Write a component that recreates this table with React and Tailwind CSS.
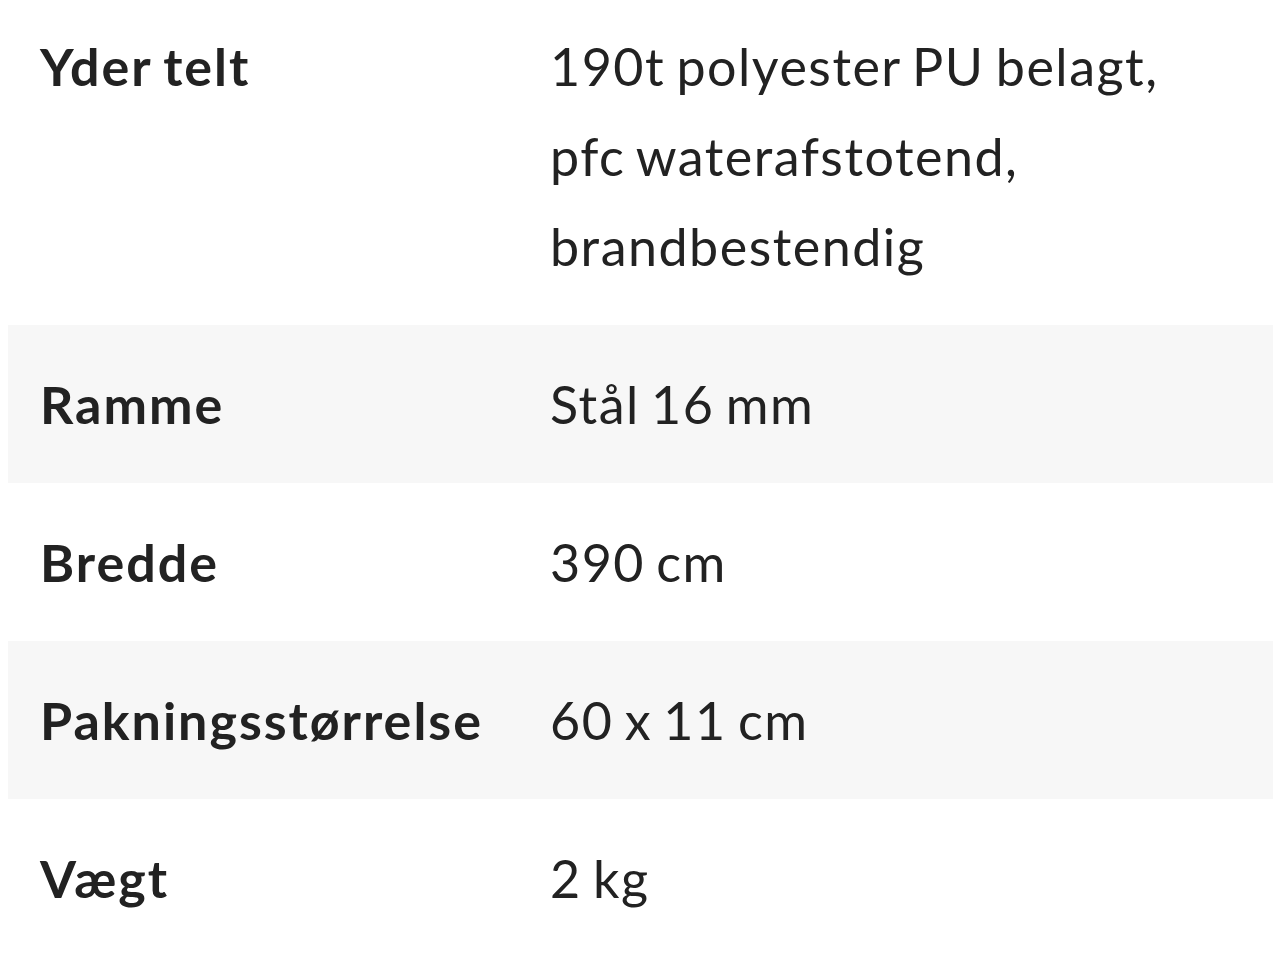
const specs = [
  { label: "Yder telt", value: ["190t polyester PU belagt,", "pfc waterafstotend,", "brandbestendig"] },
  { label: "Ramme", value: ["Stål 16 mm"] },
  { label: "Bredde", value: ["390 cm"] },
  { label: "Pakningsstørrelse", value: ["60 x 11 cm"] },
  { label: "Vægt", value: ["2 kg"] },
];

export default function App() {
  return (
    <div className="w-[1280px] h-[960px] overflow-hidden bg-white" style={{ fontFamily: "Lato, 'Noto Sans', sans-serif" }}>
      <div className="-mt-[13px] ml-[8px] w-[1265px] text-[#222222]">
        {specs.map((row, i) => (
          <div
            key={row.label}
            className={`flex py-[34px] text-[52px] leading-[90px] ${i % 2 === 1 ? "bg-[#f7f7f7]" : "bg-white"}`}
          >
            <div className="w-[542px] shrink-0 pl-[32px] font-bold tracking-[2px] [word-spacing:-3px]">{row.label}</div>
            <div className="flex-1 tracking-[1.5px] [word-spacing:-3.5px]">
              {row.value.map((line) => (
                <div key={line}>{line}</div>
              ))}
            </div>
          </div>
        ))}
      </div>
    </div>
  );
}
